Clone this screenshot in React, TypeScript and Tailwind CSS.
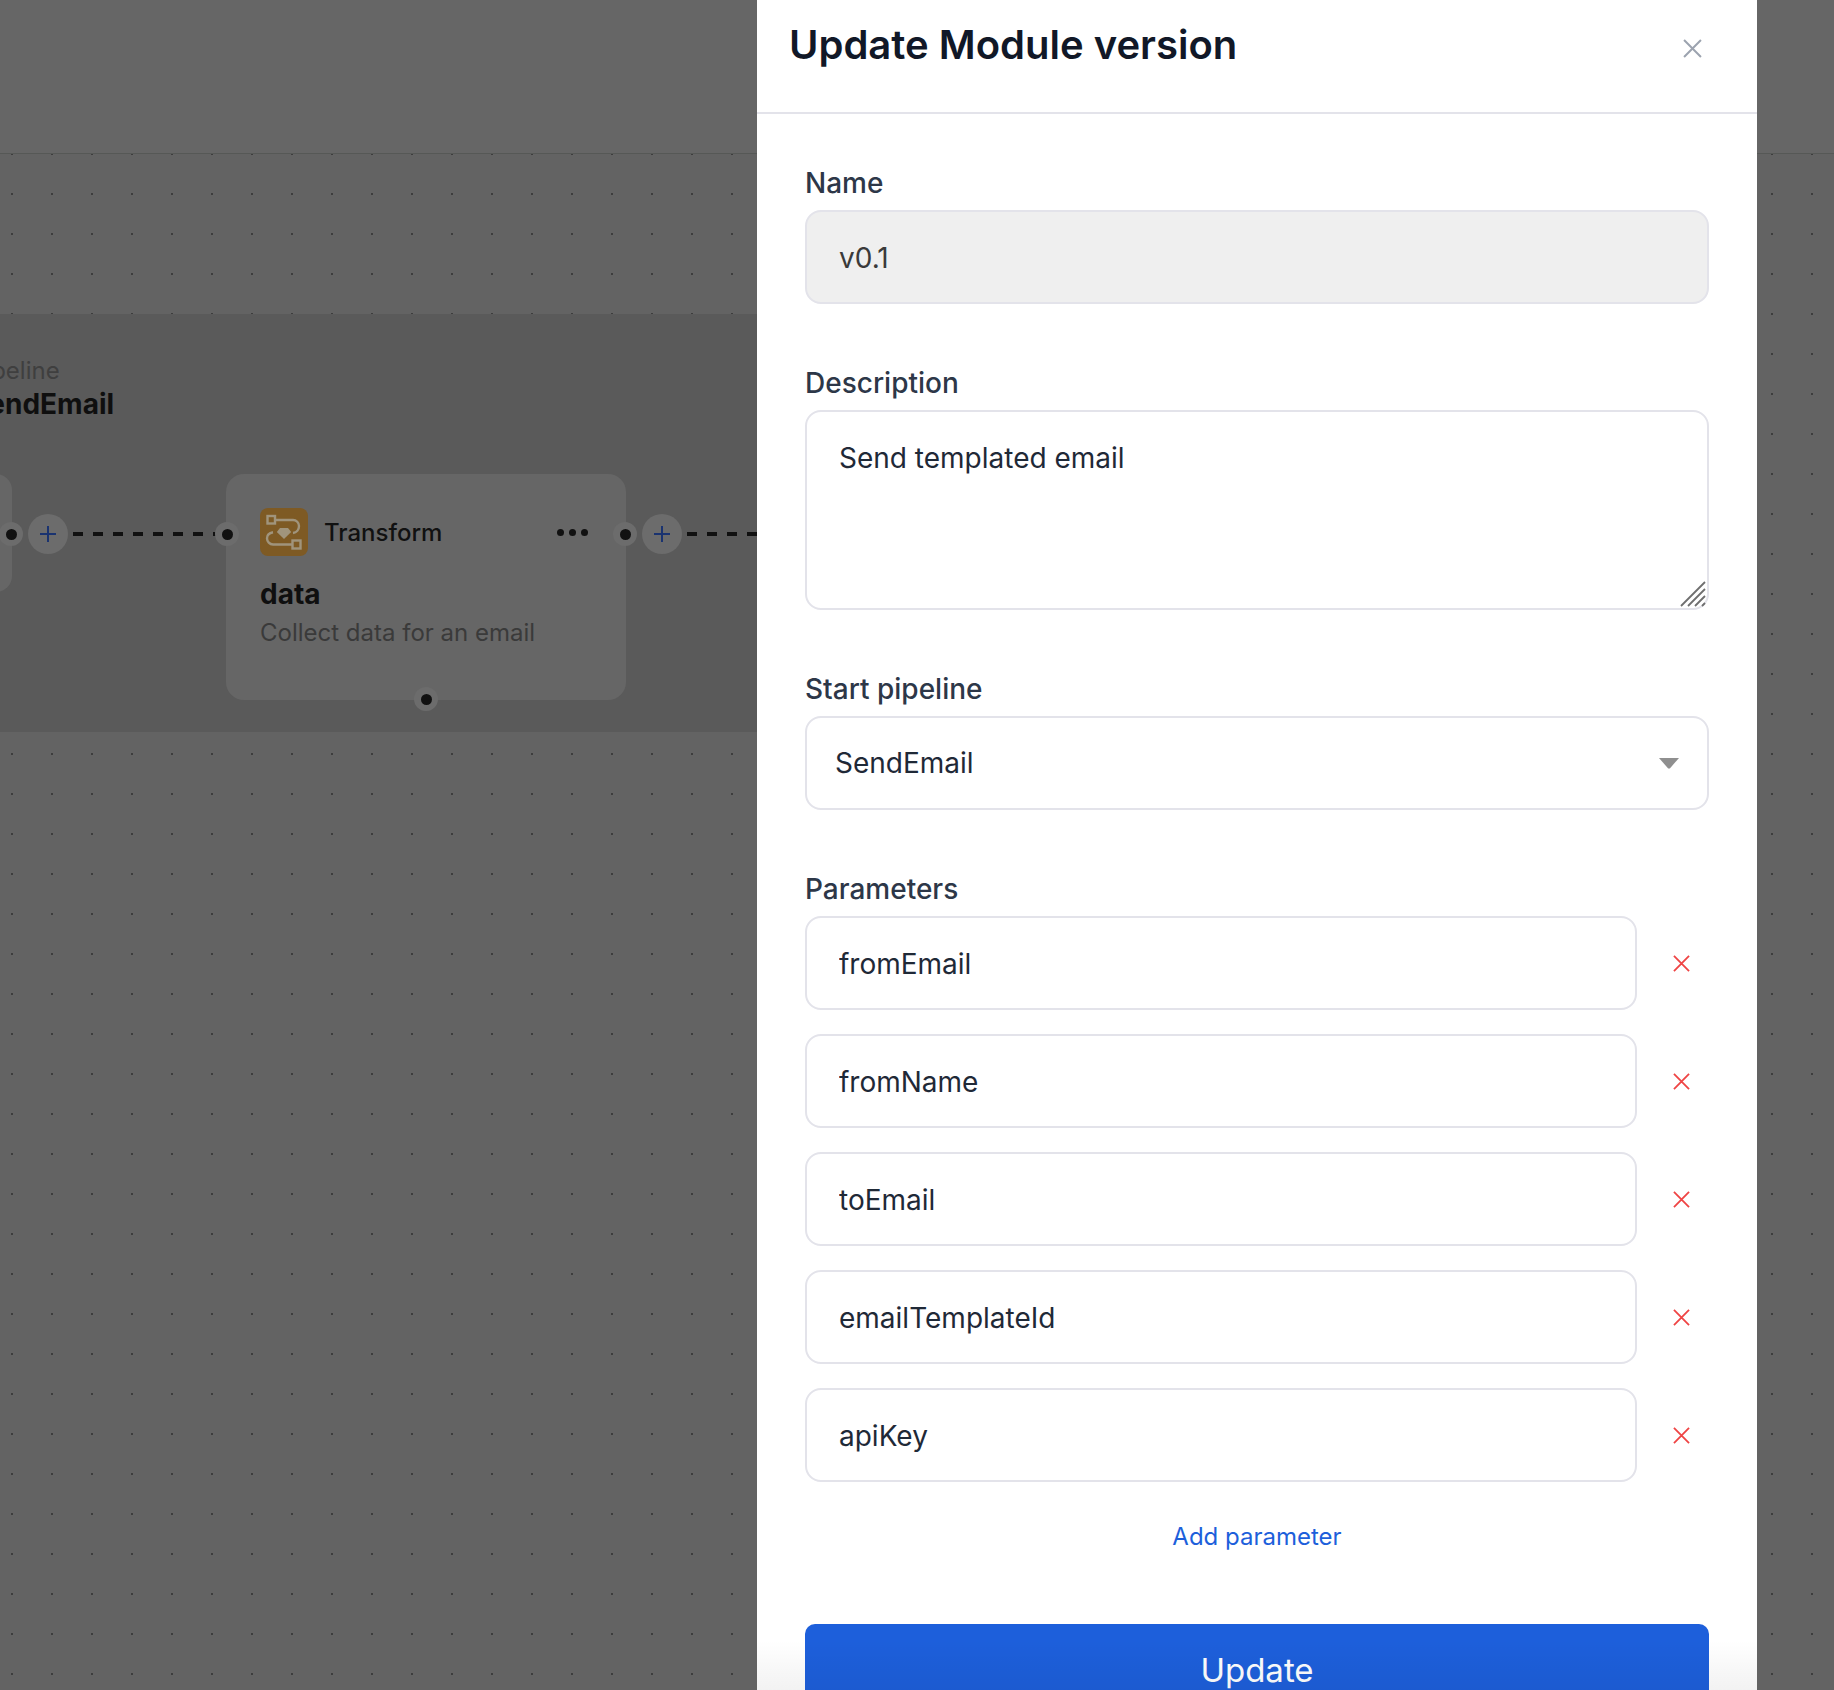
import React from "react";

const font = { fontFamily: "Inter, 'Noto Sans', sans-serif" };

function Handle({ className }: { className: string }) {
  return (
    <div className={`absolute flex h-6 w-6 items-center justify-center rounded-full bg-[#6c6c6c] ${className}`}>
      <div className="h-[11px] w-[11px] rounded-full bg-[#111111]" />
    </div>
  );
}

function PlusBtn({ className }: { className: string }) {
  return (
    <div className={`absolute flex h-10 w-10 items-center justify-center rounded-full bg-[#6c6c6c] ${className}`}>
      <svg width="16" height="16" viewBox="0 0 16 16" fill="none" stroke="#1a3370" strokeWidth="2">
        <path d="M8 0v16M0 8h16" />
      </svg>
    </div>
  );
}

function Dash({ className }: { className: string }) {
  return <div className={`absolute h-1 bg-[repeating-linear-gradient(90deg,#111111_0_10px,transparent_10px_20px)] ${className}`} />;
}

function XIcon({ size, color, width }: { size: number; color: string; width: number }) {
  return (
    <svg width={size} height={size} viewBox="0 0 18 18" fill="none" stroke={color} strokeWidth={width}>
      <path d="M1 1l16 16M17 1L1 17" />
    </svg>
  );
}

function Label({ children }: { children: React.ReactNode }) {
  return <div className="mb-[13px] text-[28px] leading-7 font-medium text-[#2d3748]">{children}</div>;
}

const inputCls =
  "block h-[94px] rounded-[16px] border-2 border-[#e3e3ea] px-[32px] pt-[2px] text-[28px] text-[#1f2937] outline-none";

function Param({ value }: { value: string }) {
  return (
    <div className="flex items-center">
      <input readOnly value={value} className={`${inputCls} w-[832px] flex-none bg-white`} style={font} />
      <div className="ml-[34px] flex w-[20px] justify-center">
        <XIcon size={17} color="#ef4444" width={1.9} />
      </div>
    </div>
  );
}

export default function App() {
  return (
    <div style={font} className="relative h-[1690px] w-[1834px] overflow-hidden bg-[#636363] bg-[radial-gradient(#3d3d3d_1px,transparent_1px)] bg-[size:40px_40px] bg-[position:-8px_14px]">
      <div className="h-[154px] w-full border-b border-[#565856] bg-[#666666]" />
      <div className="relative mt-[160px] h-[418px] w-[757px] overflow-hidden bg-[#5a5a5a]">
        <div className="ml-[-30px] pt-[41px]">
          <div className="text-[24px] leading-8 text-[#3f3f3f]">Pipeline</div>
          <div className="mt-[1px] text-[28px] leading-8 font-bold text-[#0f0f0f]">SendEmail</div>
        </div>

        <div className="absolute left-[-100px] top-[160px] h-[118px] w-[112px] rounded-[16px] bg-[#666666]" />
        <Handle className="left-[-1px] top-[208px]" />
        <PlusBtn className="left-[28px] top-[200px]" />
        <Dash className="left-[73px] top-[218px] w-[143px]" />

        <div className="absolute left-[226px] top-[160px] h-[226px] w-[400px] rounded-[18px] bg-[#666666] pl-[34px] pr-[38px] pt-[34px]">
          <div className="flex items-center">
            <svg width="48" height="48" viewBox="0 0 48 48" fill="none">
              <rect width="48" height="48" rx="8" fill="#7e5a24" />
              <g stroke="#a0947c" strokeWidth="2.4">
                <rect x="7.5" y="8" width="7.5" height="7.5" />
                <rect x="32.5" y="32.5" width="8" height="8" />
                <path d="M15 12h18a6 6 0 0 1 6 6 7 7 0 0 1-6 7" />
                <path d="M33 36.5H13a6.2 6.2 0 0 1-6-6.2c0-3 2-5.3 6-6" />
              </g>
              <path d="M20 20h8l3.2 4L24 31l-7.2-7z" fill="#a0947c" />
            </svg>
            <div className="ml-[16px] mt-[2px] flex-1 text-[24px] leading-8 font-medium text-[#111111]">Transform</div>
            <div className="flex gap-[5px]">
              <div className="h-[7px] w-[7px] rounded-full bg-[#111111]" />
              <div className="h-[7px] w-[7px] rounded-full bg-[#111111]" />
              <div className="h-[7px] w-[7px] rounded-full bg-[#111111]" />
            </div>
          </div>
          <div className="mt-[22px] text-[28px] leading-8 font-bold text-[#0f0f0f]">data</div>
          <div className="mt-[7px] text-[24px] leading-8 text-[#3a3a3a]">Collect data for an email</div>
        </div>
        <Handle className="left-[215px] top-[208px]" />
        <Handle className="left-[613px] top-[208px]" />
        <Handle className="left-[414px] top-[373px]" />
        <PlusBtn className="left-[642px] top-[200px]" />
        <Dash className="left-[687px] top-[218px] w-[80px]" />
      </div>

      <div className="absolute left-[757px] top-0 h-[1690px] w-[1000px] overflow-hidden bg-white">
        <div className="flex h-[114px] items-start justify-between border-b-2 border-[#e3e3ea] pl-[32px] pr-[55px]">
          <h1 className="mt-[21px] text-[40px] leading-[48px] font-semibold text-[#111827]">Update Module version</h1>
          <div className="mt-[39px]">
            <XIcon size={19} color="#9ca3af" width={1.9} />
          </div>
        </div>
        <div className="px-[48px] pt-[55px]">
          <Label>Name</Label>
          <input readOnly value="v0.1" className={`${inputCls} w-full bg-[#efefef] text-[#3a3a3a]`} style={font} />

          <div className="mt-[65px]">
            <Label>Description</Label>
            <div className="relative">
              <textarea readOnly value="Send templated email" className={`${inputCls} h-[200px] w-full resize-none bg-white !pt-[25px]`} style={font} />
              <svg className="absolute bottom-[3px] right-[3px]" width="26" height="26" viewBox="0 0 26 26" stroke="#6f6f6f" strokeWidth="1.8" fill="none">
                <path d="M1 25L25 1M8 25L25 8M15 25L25 15M22 25l3-3" />
              </svg>
            </div>
          </div>

          <div className="mt-[65px]">
            <Label>Start pipeline</Label>
            <div className="flex h-[94px] items-center justify-between rounded-[16px] border-2 border-[#e3e3ea] bg-white pl-[28px] pr-[28px] text-[28px] text-[#1f2937]">
              <span>SendEmail</span>
              <svg width="20" height="12" viewBox="0 0 20 12">
                <path d="M0 1h20L10.8 11.4h-1.6z" fill="#8f8f8f" />
              </svg>
            </div>
          </div>

          <div className="mt-[65px]">
            <Label>Parameters</Label>
            <div className="flex flex-col gap-[24px]">
              <Param value="fromEmail" />
              <Param value="fromName" />
              <Param value="toEmail" />
              <Param value="emailTemplateId" />
              <Param value="apiKey" />
            </div>
          </div>

          <div className="mt-[39px] text-center text-[24px] leading-8 text-[#1d5fdb]">Add parameter</div>

          <button className="mt-[71px] h-[94px] w-full rounded-[10px] bg-[#1d5fdb] text-[33px] text-white">Update</button>
        </div>
        <div className="pointer-events-none absolute bottom-0 left-0 h-[50px] w-full bg-gradient-to-b from-transparent to-black/5" />
      </div>
    </div>
  );
}
